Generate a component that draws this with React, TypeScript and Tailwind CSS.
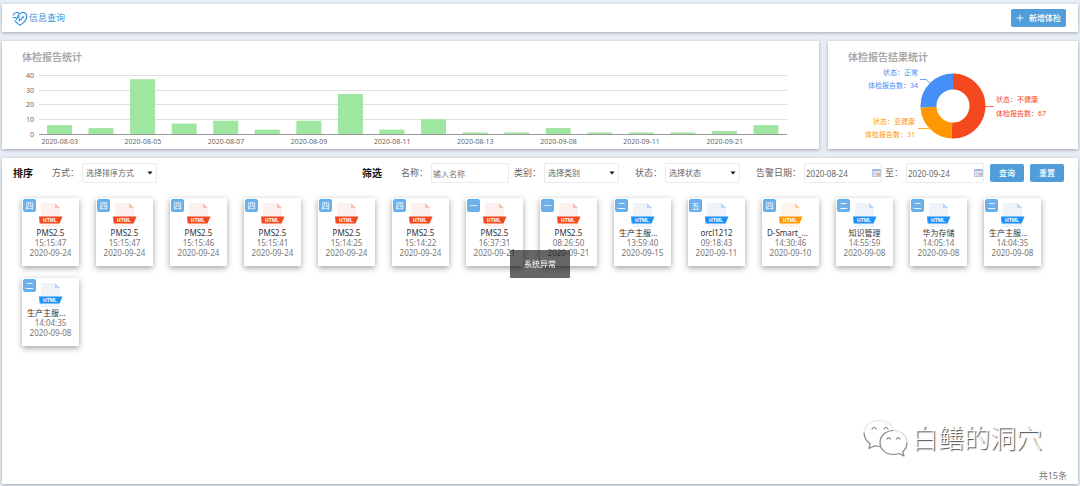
import React, { useState } from "react";

type Tone = "red" | "blue" | "orange";

type Report = {
  badge: string;
  tone: Tone;
  name: string;
  time: string;
  date: string;
};

const reports: Report[] = [
  { badge: "四", tone: "red", name: "PMS2.5", time: "15:15:47", date: "2020-09-24" },
  { badge: "四", tone: "red", name: "PMS2.5", time: "15:15:47", date: "2020-09-24" },
  { badge: "四", tone: "red", name: "PMS2.5", time: "15:15:46", date: "2020-09-24" },
  { badge: "四", tone: "red", name: "PMS2.5", time: "15:15:41", date: "2020-09-24" },
  { badge: "四", tone: "red", name: "PMS2.5", time: "15:14:25", date: "2020-09-24" },
  { badge: "四", tone: "red", name: "PMS2.5", time: "15:14:22", date: "2020-09-24" },
  { badge: "一", tone: "red", name: "PMS2.5", time: "16:37:31", date: "2020-09-21" },
  { badge: "一", tone: "red", name: "PMS2.5", time: "08:26:50", date: "2020-09-21" },
  { badge: "二", tone: "blue", name: "生产主服...", time: "13:59:40", date: "2020-09-15" },
  { badge: "五", tone: "blue", name: "orcl1212", time: "09:18:43", date: "2020-09-11" },
  { badge: "四", tone: "orange", name: "D-Smart_...", time: "14:30:46", date: "2020-09-10" },
  { badge: "二", tone: "blue", name: "知识管理", time: "14:55:59", date: "2020-09-08" },
  { badge: "二", tone: "blue", name: "华为存储", time: "14:05:14", date: "2020-09-08" },
  { badge: "二", tone: "blue", name: "生产主服...", time: "14:04:35", date: "2020-09-08" },
  { badge: "二", tone: "blue", name: "生产主服...", time: "14:04:35", date: "2020-09-08" },
];

const tones = {
  red: { page: "#fdf1f0", fold: "#fbbdb4", band: "#f4481e" },
  blue: { page: "#eef4fa", fold: "#b5d6f8", band: "#1e90fa" },
  orange: { page: "#fff4ea", fold: "#ffcd96", band: "#ff9800" },
};

const counts = [6, 4, 37, 7, 9, 3, 9, 27, 3, 10, 1, 1, 4, 1, 1, 1, 2, 6];
const days = [
  "2020-08-03",
  "2020-08-05",
  "2020-08-07",
  "2020-08-09",
  "2020-08-11",
  "2020-08-13",
  "2020-09-08",
  "2020-09-11",
  "2020-09-21",
];

const panel = "bg-white shadow-[0_1px_3px_rgba(0,0,0,0.3)]";
const field = "h-5 rounded-xs border border-[#ebebeb] bg-white text-[8px] text-[#666]";

function BarChart() {
  const step = 748 / counts.length;
  return (
    <svg viewBox="0 0 817 108" className="block w-full" role="img" aria-label="体检报告统计">
      {[0, 10, 20, 30, 40].map((v) => {
        const y = Math.round(93 - v * 1.48) + 0.5;
        return (
          <g key={v}>
            <line x1="37" x2="785" y1={y} y2={y} stroke={v === 0 ? "#999" : "#e0e0e0"} />
            <text x="32" y={y + 2} textAnchor="end" fontSize="7" fill="#666">
              {v}
            </text>
          </g>
        );
      })}
      {counts.map((n, i) => (
        <rect key={i} x={37 + i * step + 8} y={93 - n * 1.48} width="25" height={n * 1.48} fill="#9fe6a0" />
      ))}
      {days.map((d, i) => (
        <text key={d} x={37 + (i * 2 + 0.5) * step} y="103" textAnchor="middle" fontSize="7" fill="#666">
          {d}
        </text>
      ))}
    </svg>
  );
}

function Donut() {
  return (
    <svg viewBox="0 0 250 108" className="block w-full" role="img" aria-label="体检报告结果统计">
      <g fill="none" strokeWidth="16" transform="rotate(-90 125 65)">
        <circle cx="125" cy="65" r="24.5" stroke="#f4481e" pathLength="132" strokeDasharray="67 65" />
        <circle cx="125" cy="65" r="24.5" stroke="#ff9800" pathLength="132" strokeDasharray="31 101" strokeDashoffset="-67" />
        <circle cx="125" cy="65" r="24.5" stroke="#468ff7" pathLength="132" strokeDasharray="34 98" strokeDashoffset="-98" />
      </g>
      <g fill="none" strokeWidth="0.8">
        <path d="M157 65.5h9" stroke="#f4481e" />
        <path d="M101 87.5H90" stroke="#ff9800" />
        <path d="M102 42l-4-3.500h-6" stroke="#468ff7" />
      </g>
      <g fontSize="7">
        <g fill="#468ff7" textAnchor="end">
          <text x="90" y="34">状态：正常</text>
          <text x="90" y="47">体检报告数：34</text>
        </g>
        <g fill="#ff9800" textAnchor="end">
          <text x="87" y="83">状态：亚健康</text>
          <text x="87" y="96">体检报告数：31</text>
        </g>
        <g fill="#f4481e">
          <text x="168" y="61">状态：不健康</text>
          <text x="168" y="75">体检报告数：67</text>
        </g>
      </g>
    </svg>
  );
}

function FileIcon({ tone }: { tone: Tone }) {
  const c = tones[tone];
  return (
    <svg viewBox="0 0 24 24" className="h-6 w-6" aria-hidden="true">
      <path d="M2 0h14l5 5v19H2z" fill={c.page} />
      <path d="M16 0l5 5h-5z" fill={c.fold} />
      <path d="M0 13.500H23.500l-3 7H0.700z" fill={c.band} />
      <text x="11" y="19" textAnchor="middle" fontSize="5" fontWeight="700" fill="#fff" fontFamily="Liberation Sans, sans-serif">
        HTML
      </text>
    </svg>
  );
}

function ReportCard({ report }: { report: Report }) {
  // shortened names start at the left padding, the others are centred
  const align = report.name.endsWith("...") ? "text-left" : "text-center";
  return (
    <li className="relative flex h-[68px] w-[57px] flex-col items-center bg-white pt-[5px] text-[8px] leading-[10px] text-[#777] shadow-[0_2px_6px_rgba(0,0,0,0.38)]">
      <span className="absolute top-px left-px flex h-[13px] w-[13px] items-center justify-center rounded-xs border border-[#55b3f3] bg-[#6fb0ea] text-white">
        {report.badge}
      </span>
      <FileIcon tone={report.tone} />
      <span className={`mt-px w-full px-[5px] whitespace-nowrap text-[#333] ${align}`}>{report.name}</span>
      <span>{report.time}</span>
      <span>{report.date}</span>
    </li>
  );
}

function SelectField({ id, label, placeholder }: { id: string; label: string; placeholder: string }) {
  return (
    <div className="flex items-center gap-[3px]">
      <label htmlFor={id}>{label}</label>
      <div className="relative">
        <select id={id} className={`${field} w-[75px] appearance-none pl-[3px]`}>
          <option>{placeholder}</option>
        </select>
        <svg viewBox="0 0 6 4" className="pointer-events-none absolute top-2 right-1 h-1 w-[6px]" aria-hidden="true">
          <path d="M0.500 0.500h5L3 3.500z" fill="#111" />
        </svg>
      </div>
    </div>
  );
}

function DateField({ id, label, value, onChange }: { id: string; label: string; value: string; onChange: (v: string) => void }) {
  return (
    <div className="flex items-center gap-[3px]">
      <label htmlFor={id}>{label}</label>
      <div className="relative">
        <input
          id={id}
          value={value}
          onChange={(e) => onChange(e.target.value)}
          className={`${field} w-[78px] px-px`}
        />
        <svg viewBox="0 0 9 8" className="pointer-events-none absolute top-[6px] right-px h-2 w-[9px]" aria-hidden="true">
          <path d="M0.500 0.500h8v7h-8z" fill="#e6eaf4" stroke="#bcc4da" />
          <path d="M0.500 0.500h8v1.500h-8z" fill="#9fb2da" />
          <path d="M2.500 3v4M4.500 3v4M1 4.500h7" stroke="#b9c3dc" strokeWidth="0.6" />
          <path d="M5 4h3v2.500H5z" fill="#eaa58c" />
        </svg>
      </div>
    </div>
  );
}

function Watermark() {
  return (
    <div className="flex items-center gap-1 pr-9">
      <svg viewBox="0 0 45 38" className="h-[38px] w-[45px]" aria-hidden="true">
        <g fill="none" stroke="#858585" strokeWidth="1.200" strokeLinejoin="round">
          <path d="M17 27.500c-2 0-3.500-.2-5-.7L6 29.500l1.300-4.800C3.200 22 1 18.500 1 13.500" />
          <path d="M1 13.500C1.500 6 8 1.500 16 1.500c7 0 13 4 14.500 10" stroke="#e8e8e8" />
          <path d="M30.500 11.500C23 11.500 17 17 17 23.500c0 7 6 12 13.500 12 2 0 4-.4 5.500-1l5 2.500-1.300-4.300c2.800-2.200 4.300-5.500 4.300-9.200" />
          <path d="M44 23.500c0-6.500-6-12-13.500-12" stroke="#d6d6d6" />
          <path d="M9 10.500a2 2 0 0 1 4 0M21 10.500a2 2 0 0 1 4 0M24 20.500a1.700 1.700 0 0 1 3.400 0M33.500 20.500a1.700 1.700 0 0 1 3.400 0" />
        </g>
      </svg>
      <span className="text-[26px] leading-10 font-light text-white [text-shadow:1px_1px_1px_#444]">白鳝的洞穴</span>
    </div>
  );
}

function App() {
  const [name, setName] = useState("");
  const [from, setFrom] = useState("2020-08-24");
  const [to, setTo] = useState("2020-09-24");

  return (
    <div className="flex min-h-screen flex-col gap-[9px] bg-[#e7edf4] px-[2px] pt-1 pb-[2px] font-['Noto_Sans','Noto_Sans_CJK_SC',sans-serif]">
      <header className={`${panel} flex h-7 items-center justify-between pr-3 pl-[10px]`}>
        <h1 className="flex items-center gap-px text-[9px] text-[#3d93dc]">
          <svg viewBox="0 0 16 16" className="mt-[2px] h-4 w-4" fill="none" stroke="#3d93dc" strokeWidth="1.200" aria-hidden="true">
            <path d="M1.200 4.500C2 1 6 0.500 8 3c2-2.500 6.500-2 6.800 2.200C15 9 11.500 12 8 14.300 6 13 4 11.200 2.700 9.300" />
            <path d="M0.500 6.500h3L4.500 8 6.500 4l1 5.500L9.500 8l1.500-2.500 1 1.500" />
          </svg>
          信息查询
        </h1>
        <button type="button" className="flex h-[18px] w-[55px] items-center justify-center gap-[5px] rounded-xs bg-[#509dd9] text-[8px] font-medium text-white">
          <svg viewBox="0 0 8 8" className="h-2 w-2" stroke="#fff" strokeWidth="0.900" aria-hidden="true">
            <path d="M4 0.500v7M0.500 4h7" />
          </svg>
          新增体检
        </button>
      </header>

      <div className="flex gap-[9px]">
        <section className={`${panel} relative flex-1`}>
          <h2 className="absolute top-2 left-5 text-[10px] leading-4 font-bold text-[#aaa]">体检报告统计</h2>
          <BarChart />
        </section>
        <section className={`${panel} relative w-[250px]`}>
          <h2 className="absolute top-2 left-5 text-[10px] leading-4 font-bold text-[#aaa]">体检报告结果统计</h2>
          <Donut />
        </section>
      </div>

      <main className={`${panel} flex flex-1 flex-col`}>
        <form className="flex h-[30px] items-center justify-between pr-[14px] pl-[11px] text-[9px] text-[#666]">
          <div className="flex items-center gap-[19px]">
            <h2 className="text-[10px] font-bold text-[#111]">排序</h2>
            <SelectField id="sort" label="方式：" placeholder="选择排序方式" />
          </div>
          <div className="flex items-center">
            <h2 className="mr-[19px] text-[10px] font-bold text-[#111]">筛选</h2>
            <div className="mr-[5px] flex items-center gap-[3px]">
              <label htmlFor="name">名称：</label>
              <input
                id="name"
                value={name}
                onChange={(e) => setName(e.target.value)}
                placeholder="输入名称"
                className={`${field} w-[78px] px-px placeholder:text-[#777]`}
              />
            </div>
            <div className="flex items-center gap-4">
              <SelectField id="kind" label="类别：" placeholder="选择类别" />
              <SelectField id="state" label="状态：" placeholder="选择状态" />
              <div className="flex items-center gap-[3px]">
                <DateField id="from" label="告警日期：" value={from} onChange={setFrom} />
                <DateField id="to" label="至：" value={to} onChange={setTo} />
              </div>
            </div>
            <div className="ml-[6px] flex gap-[6px]">
              <button type="button" className="h-[18px] w-[34px] rounded-xs bg-[#509dd9] text-[8px] font-medium text-white">查询</button>
              <button type="button" className="h-[18px] w-[34px] rounded-xs bg-[#509dd9] text-[8px] font-medium text-white">重置</button>
            </div>
          </div>
        </form>

        <ul className="flex flex-wrap gap-x-[17px] gap-y-3 px-5 pt-[10px]">
          {reports.map((r, i) => (
            <ReportCard key={i} report={r} />
          ))}
        </ul>

        <div className="mt-auto flex flex-col items-end">
          <Watermark />
          <p className="mt-3 pr-[11px] pb-[2px] text-[9px] leading-3 text-[#777]">共15条</p>
        </div>
      </main>

      <div role="alert" className="fixed top-[250px] left-1/2 flex h-7 w-[60px] -translate-x-1/2 items-center justify-center rounded-[1px] bg-black/60 text-[8px] text-white">
        系统异常
      </div>
    </div>
  );
}

export default App;
